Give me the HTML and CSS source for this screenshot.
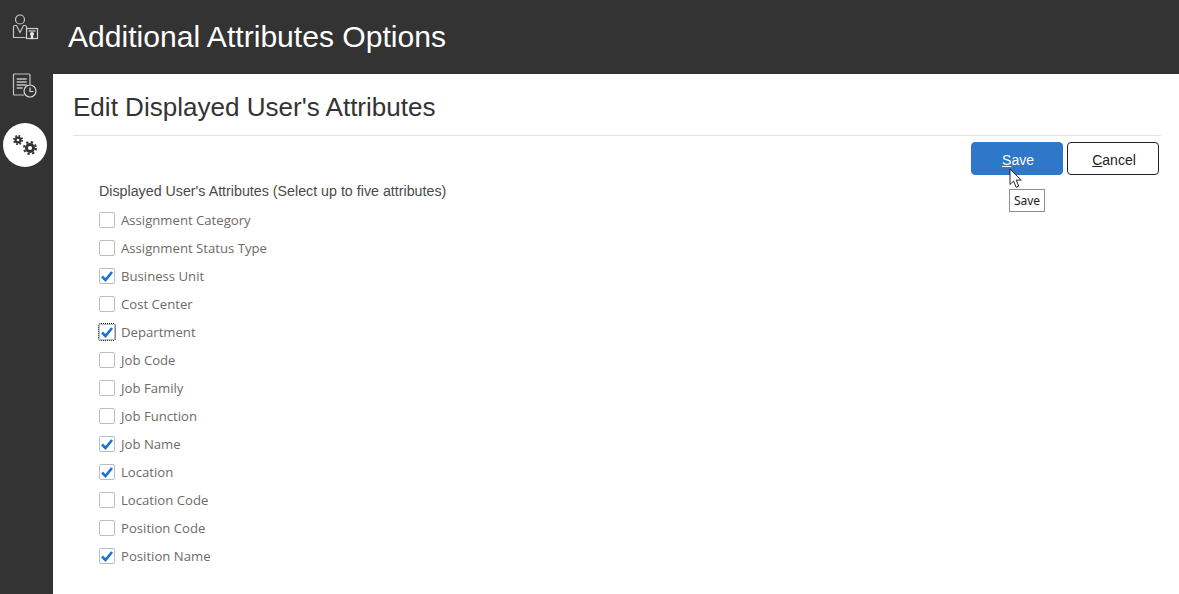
FILE: index.html
```html
<!DOCTYPE html>
<html lang="en">
<head>
<meta charset="utf-8">
<title>Additional Attributes Options</title>
<link rel="stylesheet" href="styles.css">
</head>
<body>
<div class="shell">
  <nav class="rail">
    <a class="rail-item">
      <svg width="28" height="28" viewBox="0 0 28 28" fill="none" stroke="#c4c4c4" stroke-width="1.2">
        <circle cx="9" cy="5.500" r="4.500"/>
        <path d="M15.500 14V13Q15.500 11.500 14 11.500H12.500L9 18.500 5.500 11.500H4Q2.500 11.500 2.500 13V23.500H14.500"/>
        <rect x="15.500" y="14.500" width="11" height="10" fill="#333" stroke="#d0d0d0"/>
        <path d="M17.500 17h7" stroke="#d0d0d0"/>
        <circle cx="21" cy="20" r="2" fill="#e8e8e8" stroke="none"/>
        <path d="M19.800 21.500v4l1.200-.8 1.200.8v-4" fill="#e8e8e8" stroke="none"/>
      </svg>
    </a>
    <a class="rail-item">
      <svg width="28" height="28" viewBox="0 0 28 28" fill="none" stroke="#c4c4c4" stroke-width="1.2">
        <path d="M13 23H3.500Q2.500 23 2.500 22V3Q2.500 2 3.500 2H18Q19 2 19 3V13"/>
        <path d="M5.700 7h10M5.700 10h10M5.700 13h10M5.700 16h6" stroke-width="1.500"/>
        <circle cx="19" cy="19" r="6" fill="#333" stroke="#d8d8d8"/>
        <path d="M19 15.500v4h3.500" stroke="#d8d8d8"/>
      </svg>
    </a>
    <a class="rail-item rail-item-active">
      <svg width="30" height="28" viewBox="0 0 30 28" fill="none">
        <circle cx="8" cy="9" r="3.600" fill="#333"/>
        <circle cx="8" cy="9" r="4.200" stroke="#333" stroke-width="1.800" stroke-dasharray="1.650"/>
        <circle cx="8" cy="9" r="1.300" fill="#fff"/>
        <circle cx="20" cy="17" r="5" fill="#333"/>
        <circle cx="20" cy="17" r="6" stroke="#333" stroke-width="2" stroke-dasharray="2.360"/>
        <circle cx="20" cy="17" r="2.100" fill="#fff"/>
      </svg>
    </a>
  </nav>
  <div class="main">
    <header class="topbar"><h1>Additional Attributes Options</h1></header>
    <section class="content">
      <h2>Edit Displayed User's Attributes</h2>
      <div class="actions">
        <button class="btn btn-primary"><u>S</u>ave</button>
        <button class="btn btn-secondary"><u>C</u>ancel</button>
        <span class="tooltip">Save</span>
        <svg class="cursor" width="14" height="21" viewBox="0 0 14 21">
          <path d="M1 1v15.500l3.600-3.400 2.600 6.200 2.600-1.100-2.600-6.100h5z" fill="#fff" stroke="#222" stroke-width="1"/>
        </svg>
      </div>
      <div class="form">
        <p class="legend">Displayed User's Attributes (Select up to five attributes)</p>
        <ul class="list">
          <li class="row"><span class="box"></span>Assignment Category</li>
          <li class="row"><span class="box"></span>Assignment Status Type</li>
          <li class="row"><span class="box on"><svg viewBox="0 0 16 16" class="tick"><path d="M3 8.500l3.500 3.500L13 4"/></svg></span>Business Unit</li>
          <li class="row"><span class="box"></span>Cost Center</li>
          <li class="row"><span class="box on focus"><svg viewBox="0 0 16 16" class="tick"><path d="M3 8.500l3.500 3.500L13 4"/></svg></span>Department</li>
          <li class="row"><span class="box"></span>Job Code</li>
          <li class="row"><span class="box"></span>Job Family</li>
          <li class="row"><span class="box"></span>Job Function</li>
          <li class="row"><span class="box on"><svg viewBox="0 0 16 16" class="tick"><path d="M3 8.500l3.500 3.500L13 4"/></svg></span>Job Name</li>
          <li class="row"><span class="box on"><svg viewBox="0 0 16 16" class="tick"><path d="M3 8.500l3.500 3.500L13 4"/></svg></span>Location</li>
          <li class="row"><span class="box"></span>Location Code</li>
          <li class="row"><span class="box"></span>Position Code</li>
          <li class="row"><span class="box on"><svg viewBox="0 0 16 16" class="tick"><path d="M3 8.500l3.500 3.500L13 4"/></svg></span>Position Name</li>
        </ul>
      </div>
    </section>
  </div>
</div>
</body>
</html>
```
FILE: styles.css
```css
* { box-sizing: border-box; }
html, body { margin: 0; height: 100%; overflow: hidden; }
body { font-family: "Liberation Sans", Arial, sans-serif; background: #fff; }
.shell { display: flex; height: 594px; }
.rail { width: 53px; flex: none; background: #333; display: flex; flex-direction: column; align-items: flex-start; padding: 14px 0 0 11px; }
.rail-item { display: flex; align-items: center; justify-content: center; width: 28px; height: 28px; margin-bottom: 30px; }
.rail-item-active { width: 44px; height: 44px; margin: -7px 0 0 -8px; border-radius: 50%; background: #fff; }
.main { flex: 1; min-width: 0; }
.topbar { height: 74px; background: #333; display: flex; align-items: center; padding-left: 15px; }
.topbar h1 { margin: 0; color: #fff; font-size: 30.100px; font-weight: 400; }
.content { padding: 0 18px 0 20px; position: relative; }
.content h2 { margin: 0; height: 62px; padding-top: 18px; font-size: 26.050px; line-height: 31px; font-weight: 400; color: #333; border-bottom: 1px solid #dfe4ea; }
.actions { display: flex; justify-content: flex-end; gap: 4px; padding: 6px 2px 0 0; position: relative; }
.btn { width: 92px; height: 33px; border-radius: 4px; font: 14px "Liberation Sans", Arial, sans-serif; padding: 2px 0 0 2px; }
.btn-primary { background: #2e77c9; border: 1px solid #2e77c9; color: #fff; }
.btn-secondary { background: #fff; border: 1px solid #222; color: #222; }
.tooltip { position: absolute; left: 936px; top: 53px; width: 36px; height: 23px; border: 1px solid #8f8f8f; background: #fff; font: 12px/21px "Noto Sans", sans-serif; text-align: center; color: #222; }
.cursor { position: absolute; left: 936px; top: 32px; }
.form { padding: 7px 0 0 26px; }
.legend { margin: 0 0 6px; font-size: 14.250px; line-height: 18px; color: #4a4a4a; }
.list { list-style: none; margin: 0; padding: 0; }
.row { display: flex; align-items: center; height: 28px; font: 13.150px "Open Sans", sans-serif; color: #6f6a66; }
.box { width: 16px; height: 16px; margin: -1px 6px 0 0; border: 1px solid #b9bec4; border-radius: 2px; background: #fff; position: relative; flex: none; }
.box.focus { outline: 1px dotted #111; outline-offset: 0; }
.tick { position: absolute; left: -1px; top: -1px; width: 16px; height: 16px; fill: none; stroke: #1a73d4; stroke-width: 2.600; }
```
